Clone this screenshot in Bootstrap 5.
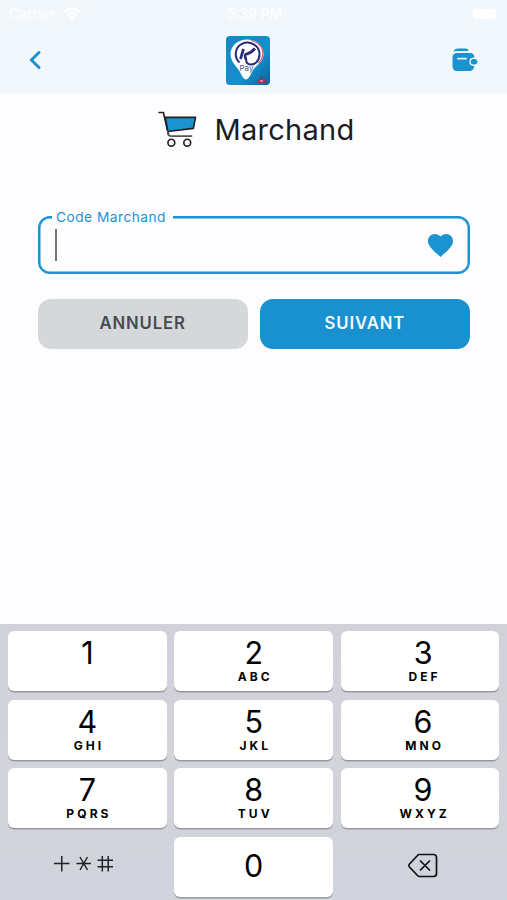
<!DOCTYPE html>
<html lang="fr">
<head>
<meta charset="utf-8">
<meta name="viewport" content="width=device-width, initial-scale=1">
<title>Marchand</title>
<link href="https://cdn.jsdelivr.net/npm/bootstrap@5.3.0/dist/css/bootstrap.min.css" rel="stylesheet">
<style>
:root{--kp-blue:#1b93d1}
body{font-family:Inter,"Liberation Sans",sans-serif;background:#fdfdff;color:#1c1c1e;height:900px;overflow:hidden}
svg{display:block;flex:none}
.top-area{height:94px;background:#f1f7fa}
.status-line{height:27px;padding:0 11px 0 9px;color:#fff;font-size:14px}
.status-line>*{flex:1 1 0}
.status-time{padding-left:4px}
.app-bar{height:66px;padding:0 29px 0 28px}
.brand-mark{margin-right:10px}
.page-title{height:72px;gap:18px;padding-left:5px}
.page-title svg{margin-bottom:2px}
.page-title h1{font-size:29px;font-weight:400;letter-spacing:.25px;line-height:36px}
.form-area{padding:50px 37px 0 37.5px}
.code-field{height:58px;border:2px solid var(--kp-blue);box-shadow:inset 0 0 0 .5px var(--kp-blue);border-radius:12px;padding:0 15px 0 15px}
.code-field legend{position:absolute;top:-10px;left:12px;width:auto;padding:0 7px 0 4.5px;background:#fdfdff;color:var(--kp-blue);font-size:13.7px;line-height:18px;letter-spacing:.5px}
.caret{width:2.5px;height:32px;background:#777}
.actions{gap:12px;margin-top:25px}
.actions .btn{height:50px;border-radius:13px;border:0;font-size:16.7px;font-weight:600;letter-spacing:.9px;padding:0 0 1px}
.btn-cancel,.btn-cancel:hover{background:#d4d8db;color:#484b4d}
.btn-next,.btn-next:hover{background:#1990cf;color:#f3fbff}
.keypad{height:276px;background:linear-gradient(#d0d1d9,#d3d3da 50%,#d0d4dd);padding:7px 7.5px 0 8px;display:grid;grid-template-columns:repeat(3,1fr);grid-auto-rows:60px;gap:8.6px 7.5px}
.pad-key{background:#fff;border:0;border-radius:6px;box-shadow:0 1.5px 0 #96979c;color:#000;padding:4px 0 0}
.pad-key:nth-child(3n){padding-left:6px}
.pad-key b{font-weight:400;font-size:30.5px;line-height:35px}
.pad-key span{font-size:12px;font-weight:700;line-height:14px;letter-spacing:3.1px;margin-right:-3.1px}
.pad-key.zero{padding:0 0 3px}
.flat-key{background:none;border:0;padding:0}
.symbols-key{padding:0 7px 6px 0}
.erase-key{padding:0 0 2px 6px}
</style>
<script src="https://cdn.jsdelivr.net/npm/bootstrap@5.3.0/dist/js/bootstrap.bundle.min.js"></script>
</head>
<body class="d-flex flex-column">
<header class="top-area">
  <div class="status-line d-flex align-items-center">
    <div class="d-flex align-items-center gap-2"><span>Carrier</span>
      <svg width="18" height="14" viewBox="0 0 18 14" fill="none" stroke="#fff" stroke-width="2.4"><path d="M1 5Q9-2 17 5M4 8.4Q9 4 14 8.4"/><path d="M6.3 10.3Q9 8 11.7 10.3L9 13Z" fill="#fff" stroke="none"/></svg></div>
    <div class="status-time text-center">5:39 PM</div>
    <div class="d-flex justify-content-end"><svg width="23" height="10"><rect width="23" height="10" rx="2" fill="#fff"/></svg></div>
  </div>
  <nav class="app-bar d-flex align-items-center justify-content-between">
    <svg width="26" height="20" viewBox="0 0 26 20" fill="none" stroke="#1b93d1" stroke-width="3" stroke-linecap="round"><path d="M11 2.500 3.400 10l7.600 7.500"/></svg>
    <svg class="brand-mark" width="44" height="49" viewBox="0 0 44 49">
      <defs><linearGradient id="lg" x2="1" y2="1"><stop stop-color="#1487c5"/><stop offset=".6" stop-color="#168fcd"/><stop offset="1" stop-color="#0b629c"/></linearGradient></defs>
      <rect width="44" height="49" rx="4" fill="url(#lg)"/>
      <path d="M21 3.500C11.500 3.500 4.500 10 4.500 18.500c0 7 6 11.500 9.500 17.500 2 3.700 3.500 7.500 6 7.500s4-4 6.500-8.500C30 29 37.500 26 37.500 18 37.500 10 30.500 3.500 21 3.500Z" fill="#fff"/>
      <path d="M25 4.500C33 6 37 11 36.800 18c-.3 4-2.300 7-4.300 9" fill="none" stroke="#d8606c" stroke-width="1.200"/>
      <path d="M13.500 26.500C7.500 21 9 11 16 7.800c8-3.500 17.500 1.500 17.500 10.200 0 7-4.500 10.500-8.500 10.500-3.500 0-5-2.500-5-5.500" fill="none" stroke="#2a2a7c" stroke-width="2"/>
      <path d="M17.500 13 14.500 23M29 12.500c-3 3.500-6 5-9.500 6-1 1.500 0 3 .5 5" fill="none" stroke="#2a2a7c" stroke-width="2.700"/>
      <text x="13.500" y="34.500" font-family="Inter,sans-serif" font-size="8" fill="#3d5588">Pay</text>
      <rect x="31.500" y="43" width="8.500" height="4" rx="1.500" fill="#a32f4d"/><path d="M34 42.500q1.500-2.500 3 0" fill="none" stroke="#23337a"/>
      <path d="M34 45h3" stroke="#e6d7e7"/>
    </svg>
    <svg width="26" height="24" viewBox="0 0 26 24">
      <path d="M1.500 4C2 1.500 4 .6 6 .6h8c1.500 0 2.500 1 2.500 2.400H5C3.500 3 2.400 3.300 1.500 4Z" fill="#1b93d1"/>
      <path d="M5 5h13c3 0 4.500 2 4.500 4.500h-1.500a4.300 4.300 0 0 0 0 8.500h1.300c-.3 3-2 5-4.800 5H5c-3 0-4.500-2-4.500-5V9.500C.5 6.500 2 5 5 5Z" fill="#1b93d1"/>
      <path d="M6 10.700h8" stroke="#e8f6fd" stroke-width="1.800" stroke-linecap="round"/>
      <path d="M21.500 11H23q2.500.5 2.500 2.750T23 16.500h-1.500a2.750 2.750 0 0 1 0-5.500Z" fill="#1b93d1"/>
    </svg>
  </nav>
</header>
<main class="flex-grow-1">
  <div class="page-title d-flex align-items-center justify-content-center">
    <svg width="39" height="37" viewBox="0 0 40 38" fill="none" stroke="#222" stroke-width="1.700" stroke-linejoin="round" stroke-linecap="round">
      <path d="M1 1.500h4.500L11 25"/><path d="M7.500 6.500H38.500l-2.200 11.300L10 21Z" fill="#1b93d1"/>
      <path d="M10 21c-.2 3 1 4.800 3.500 4.800H34.500" stroke="#555"/><circle cx="13.700" cy="32.500" r="3.500"/><circle cx="30" cy="32.500" r="3.500"/>
    </svg>
    <h1 class="m-0">Marchand</h1>
  </div>
  <form class="form-area">
    <fieldset class="code-field position-relative d-flex align-items-center justify-content-between">
      <legend class="m-0">Code Marchand</legend>
      <div class="caret"></div>
      <svg width="25" height="23" viewBox="2 3 20 18.350" preserveAspectRatio="none"><path fill="#1b93d1" d="M12 21.350l-1.450-1.320C5.400 15.360 2 12.280 2 8.500 2 5.420 4.420 3 7.500 3c1.740 0 3.410.81 4.500 2.090C13.090 3.810 14.760 3 16.500 3 19.580 3 22 5.420 22 8.500c0 3.780-3.400 6.860-8.550 11.540L12 21.350z"/></svg>
    </fieldset>
    <div class="actions d-flex">
      <button type="button" class="btn btn-cancel flex-fill w-50">ANNULER</button>
      <button type="button" class="btn btn-next flex-fill w-50">SUIVANT</button>
    </div>
  </form>
</main>
<section class="keypad">
  <button class="pad-key d-flex flex-column align-items-center"><b>1</b></button>
  <button class="pad-key d-flex flex-column align-items-center"><b>2</b><span>ABC</span></button>
  <button class="pad-key d-flex flex-column align-items-center"><b>3</b><span>DEF</span></button>
  <button class="pad-key d-flex flex-column align-items-center"><b>4</b><span>GHI</span></button>
  <button class="pad-key d-flex flex-column align-items-center"><b>5</b><span>JKL</span></button>
  <button class="pad-key d-flex flex-column align-items-center"><b>6</b><span>MNO</span></button>
  <button class="pad-key d-flex flex-column align-items-center"><b>7</b><span>PQRS</span></button>
  <button class="pad-key d-flex flex-column align-items-center"><b>8</b><span>TUV</span></button>
  <button class="pad-key d-flex flex-column align-items-center"><b>9</b><span>WXYZ</span></button>
  <button class="flat-key symbols-key d-flex align-items-center justify-content-center" aria-label="+*#">
    <svg width="64" height="20" viewBox="0 0 64 20" fill="none" stroke="#222" stroke-width="1.500"><path d="M2 9.500h15.500M9.750 2v15.500M24.500 9.500H39M28 3l7.500 13M35.500 3 28 16M45.500 6.200H61M45.500 12.700H61M50.300 2v15.500M56.200 2v15.500"/></svg>
  </button>
  <button class="pad-key zero d-flex align-items-center justify-content-center"><b>0</b></button>
  <button class="flat-key erase-key d-flex align-items-center justify-content-center" aria-label="Effacer">
    <svg width="30" height="26" viewBox="0 0 30 26" fill="none" stroke="#111" stroke-width="1.700" stroke-linejoin="round" stroke-linecap="round"><path d="M11 1.500h14.500q3 0 3 3v16q0 3-3 3H11.500q-1 0-2-1l-8-8.500q-1.200-1.500 0-3l8-8.500q.8-1 1.500-1ZM12.500 8l9 9M21.500 8l-9 9"/></svg>
  </button>
</section>
</body>
</html>
